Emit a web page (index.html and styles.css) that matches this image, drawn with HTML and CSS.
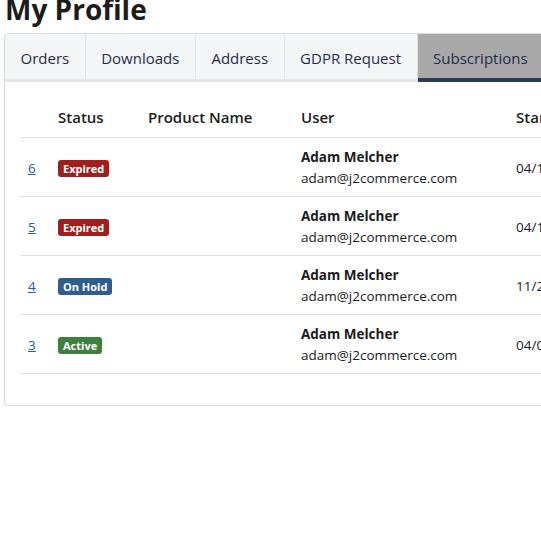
FILE: index.html
```html
<!DOCTYPE html>
<html lang="en">
<head>
  <meta charset="UTF-8">
  <meta name="viewport" content="width=device-width, initial-scale=1.0">
  <title>My Profile</title>
  <link rel="stylesheet" href="styles.css">
</head>
<body>
  <h1 class="page-title">My Profile</h1>
  <div class="profile-card">
    <ul class="tabs">
      <li class="tab">Orders</li>
      <li class="tab">Downloads</li>
      <li class="tab">Address</li>
      <li class="tab">GDPR Request</li>
      <li class="tab active">Subscriptions</li>
    </ul>

    <div class="tab-body">
      <table class="subs">
        <thead>
          <tr>
            <th class="col-id"></th>
            <th class="col-status">Status</th>
            <th class="col-product">Product Name</th>
            <th class="col-user">User</th>
            <th class="col-start">Start Date</th>
          </tr>
        </thead>
        <tbody>
          <tr>
            <td><a href="#">6</a></td>
            <td><span class="badge expired">Expired</span></td>
            <td></td>
            <td><div class="user-name">Adam Melcher</div><div>adam@j2commerce.com</div></td>
            <td>04/12/2024</td>
          </tr>
          <tr>
            <td><a href="#">5</a></td>
            <td><span class="badge expired">Expired</span></td>
            <td></td>
            <td><div class="user-name">Adam Melcher</div><div>adam@j2commerce.com</div></td>
            <td>04/12/2024</td>
          </tr>
          <tr>
            <td><a href="#">4</a></td>
            <td><span class="badge on-hold">On Hold</span></td>
            <td></td>
            <td><div class="user-name">Adam Melcher</div><div>adam@j2commerce.com</div></td>
            <td>11/20/2023</td>
          </tr>
          <tr>
            <td><a href="#">3</a></td>
            <td><span class="badge active">Active</span></td>
            <td></td>
            <td><div class="user-name">Adam Melcher</div><div>adam@j2commerce.com</div></td>
            <td>04/02/2023</td>
          </tr>
        </tbody>
      </table>
    </div>
  </div>
</body>
</html>
```

FILE: styles.css
```css
html, body {
  overflow: hidden;
}

body {
  margin: 0;
  font-family: "Open Sans", "Noto Sans", sans-serif;
  color: #1a1a1a;
  background: #fff;
}

.page-title {
  font-size: 28px;
  font-weight: 700;
  line-height: 32px;
  margin: -7px 0 8px 5px;
  color: #1c1c1c;
}

.profile-card {
  width: 760px;
  margin-left: 4px;
  border: 1px solid #dcdcdc;
  border-radius: 4px;
  box-shadow: 0 1px 3px rgba(0, 0, 0, 0.08);
  padding-bottom: 31px;
}

.tabs {
  display: flex;
  list-style: none;
  margin: 0;
  padding: 0;
  background: #f4f5f6;
  border-bottom: 3px solid #e4e4e4;
  border-radius: 4px 4px 0 0;
}

.tab {
  padding: 13px 15.5px 8px;
  font-size: 15px;
  line-height: 23px;
  color: #1f2d4a;
  border-right: 1px solid #e2e2e2;
}

.tab.active {
  background: #a8a8a8;
  border-right: none;
  margin-bottom: -3px;
  border-bottom: 4px solid #2b3a5c;
}

.tab-body {
  padding: 16px 0 0 15px;
}

.subs {
  border-collapse: collapse;
  font-size: 13.5px;
}

.subs th {
  text-align: left;
  font-weight: 600;
  font-size: 15px;
  color: #1c1c1c;
  padding: 9px 8px 10px;
  border-bottom: 1px solid #e2e2e2;
}

.subs td {
  padding: 9px 8px 7px;
  height: 42px;
  border-bottom: 1px solid #e2e2e2;
  line-height: 21px;
  vertical-align: middle;
}

.col-id { width: 14px; }
.col-status { width: 74px; }
.col-product { width: 137px; }
.col-user { width: 199px; }
.col-start { width: 120px; }

.subs a {
  color: #2a5aa0;
  text-decoration: underline;
}

.user-name {
  font-weight: 700;
}

.badge {
  display: inline-block;
  color: #fff;
  font-size: 11px;
  font-weight: 700;
  line-height: 17px;
  padding: 0 5px;
  border-radius: 3px;
  vertical-align: middle;
}

.badge.expired { background: #a01f1c; }
.badge.on-hold { background: #2f5e8e; }
.badge.active { background: #3f7f3f; }
```
